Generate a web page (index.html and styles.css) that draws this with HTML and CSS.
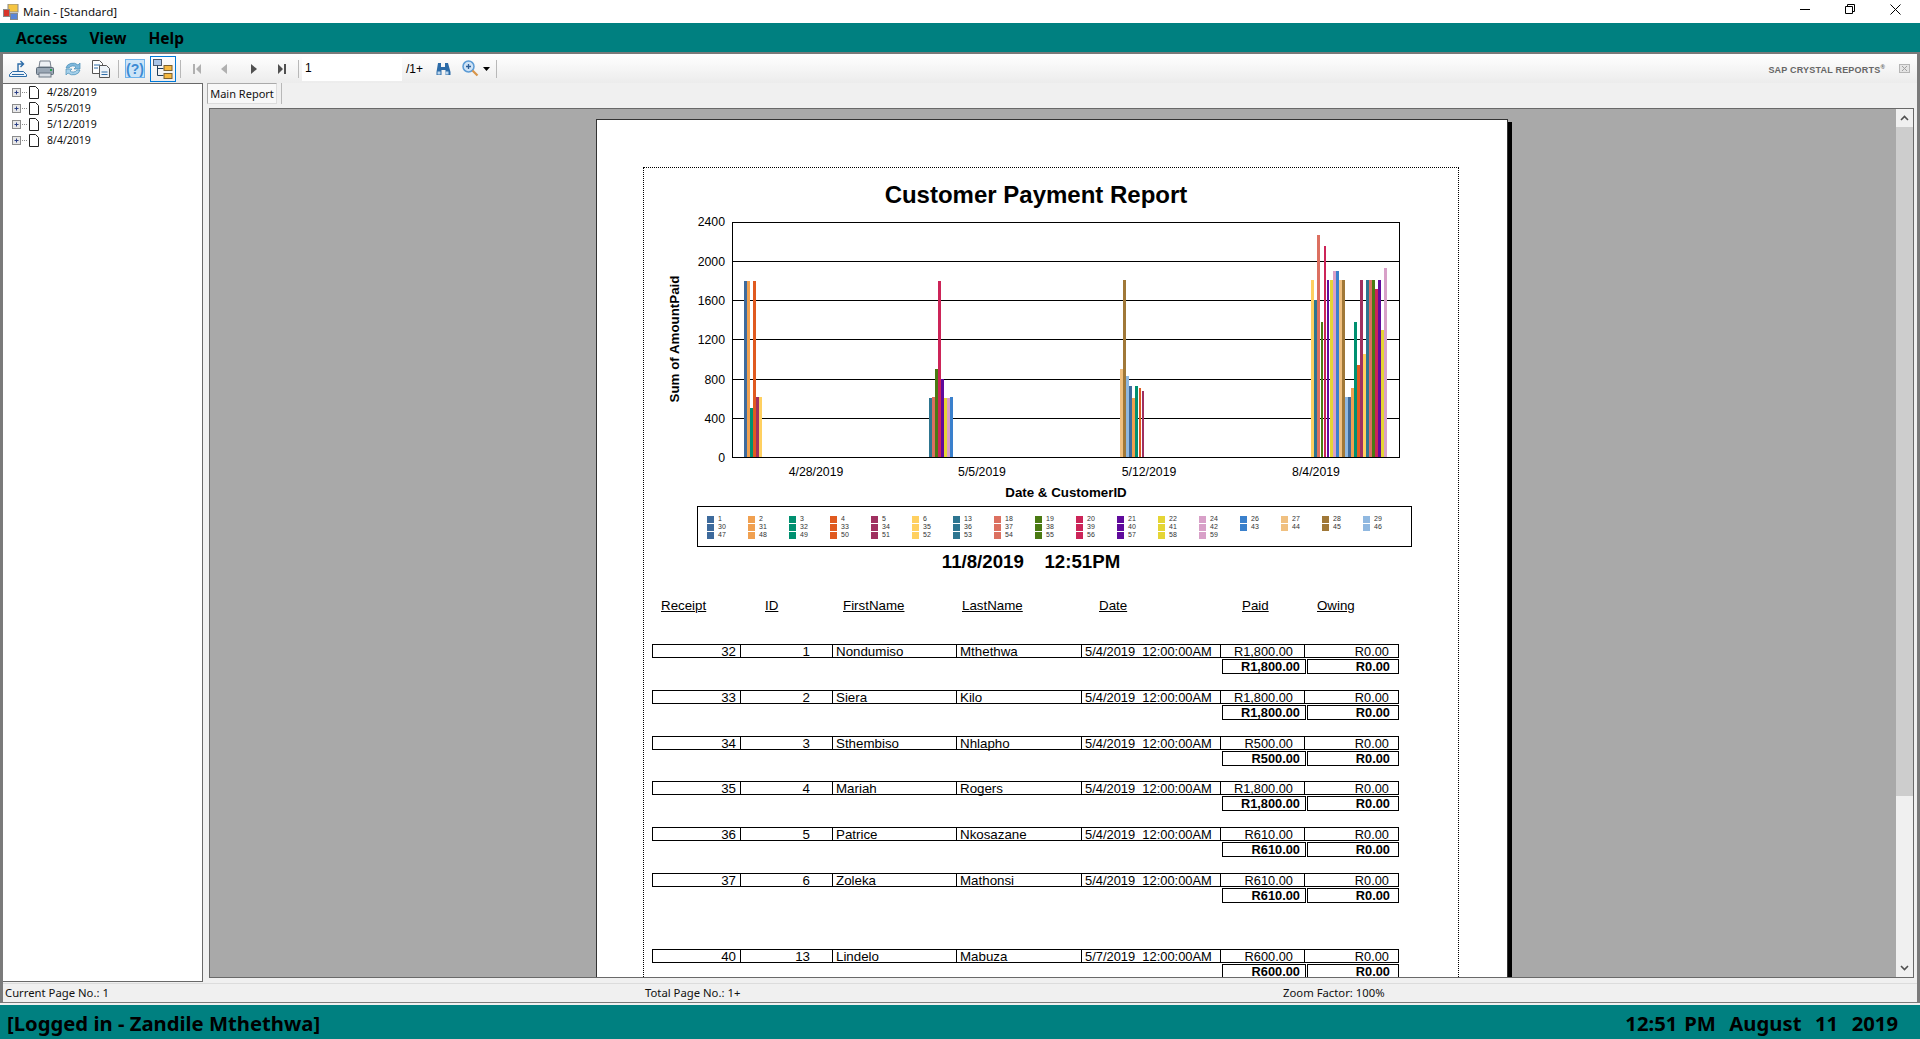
FILE: index.html
```html
<!DOCTYPE html>
<html lang="en">
<head>
  <meta charset="UTF-8" />
  <title>Main - [Standard]</title>
  <link rel="stylesheet" href="styles.css">
</head>
<body>

  <!-- title bar -->
  <div class="titlebar">
    <svg class="app-icon" width="16" height="16" viewBox="0 0 16 16">
      <rect x="5" y="0" width="10" height="8" fill="#f5c542" stroke="#8a8a8a"/>
      <rect x="0.5" y="5.5" width="6" height="7" fill="#d8342a" stroke="#8a8a8a"/>
      <rect x="7.5" y="9.5" width="7" height="6" fill="#5a86d8" stroke="#8a8a8a"/>
    </svg>
    <span class="title-text">Main - [Standard]</span>
    <div class="win-btns">
      <svg width="10" height="10" viewBox="0 0 10 10"><path d="M0 5.5h10" stroke="#000" fill="none"/></svg>
      <svg width="10" height="10" viewBox="0 0 10 10"><path d="M.5 2.5h7v7h-7zM2.5 2.5v-2h7v7h-2" stroke="#000" fill="none"/></svg>
      <svg width="11" height="11" viewBox="0 0 11 11"><path d="M.5 .5l10 10M10.5 .5l-10 10" stroke="#000" fill="none"/></svg>
    </div>
  </div>

  <!-- menu -->
  <div class="menubar">
    <span>Access</span>
    <span>View</span>
    <span>Help</span>
  </div>

  <div class="viewer">

    <!-- toolbar -->
    <div class="toolbar">
      <svg class="tool tool-export" width="20" height="20" viewBox="0 0 20 20">
        <path d="M1.500 17.500v-2l3-3h11l3 3v2z" fill="#eef4fa" stroke="#2d6ca8"/>
        <path d="M4 15.500h12" stroke="#2d6ca8"/>
        <path d="M10 12.500V5h5M12.500 2l3 3-3 3" fill="none" stroke="#2d6ca8" stroke-width="1.400"/>
      </svg>
      <svg class="tool tool-print" width="20" height="20" viewBox="0 0 20 20">
        <path d="M5 2h10l1 6H4z" fill="#eef1f5" stroke="#77808c"/>
        <rect x="1.500" y="8.500" width="17" height="7" rx="1" fill="#9aa7b5" stroke="#5c6a78"/>
        <rect x="4" y="14" width="12" height="4" fill="#d7dde4" stroke="#6d7885"/>
        <rect x="15" y="10" width="2" height="2" fill="#2aa050"/>
      </svg>
      <svg class="tool tool-refresh" width="20" height="20" viewBox="0 0 20 20">
        <path d="M3 9a7 6 0 0 1 12-3l2-2v6h-6l2-2a4.500 4 0 0 0-7 1z" fill="#7fb8dc" stroke="#4a8fb8" stroke-width=".7"/>
        <path d="M17 11a7 6 0 0 1-12 3l-2 2v-6h6l-2 2a4.500 4 0 0 0 7-1z" fill="#a5d0ea" stroke="#4a8fb8" stroke-width=".7"/>
      </svg>
      <svg class="tool tool-copy" width="20" height="20" viewBox="0 0 20 20">
        <path d="M1.500 1.500h7l3 3v10h-10z" fill="#fff" stroke="#555"/>
        <path d="M8.500 6.500h7l3 3v9h-10z" fill="#eef3f8" stroke="#555"/>
        <path d="M3 6h6M3 9h4M10.500 13h6M10.500 15.500h6" stroke="#2d6ca8"/>
      </svg>
      <span class="tool-sep sep-a"></span>
      <span class="help-btn">(?)</span>
      <span class="tree-btn">
        <svg width="22" height="22" viewBox="0 0 22 22">
          <rect x="1.500" y="1.500" width="8" height="6" fill="#a8c4e8" stroke="#4a5a70"/>
          <path d="M5.500 7.500v10h6M5.500 10.500h6" fill="none" stroke="#1e3c5a"/>
          <rect x="12" y="7.500" width="8" height="5" fill="#f5b840" stroke="#7a6030"/>
          <rect x="12" y="15.500" width="8" height="5" fill="#f5b840" stroke="#7a6030"/>
        </svg>
      </span>
      <span class="tool-sep sep-b"></span>
      <svg class="nav nav-first" width="8" height="10" viewBox="0 0 8 10"><path d="M0 0h2v10H0zM8 0v10L3 5z" fill="#b0b0b0"/></svg>
      <svg class="nav nav-prev" width="6" height="10" viewBox="0 0 6 10"><path d="M6 0v10L0 5z" fill="#b0b0b0"/></svg>
      <svg class="nav nav-next" width="6" height="10" viewBox="0 0 6 10"><path d="M0 0v10l6-5z" fill="#505050"/></svg>
      <svg class="nav nav-last" width="8" height="10" viewBox="0 0 8 10"><path d="M0 0v10l5-5zM6 0h2v10H6z" fill="#505050"/></svg>
      <span class="tool-sep sep-c"></span>
      <span class="page-input">1</span>
      <span class="page-total">/1+</span>
      <svg class="tool tool-find" width="16" height="16" viewBox="0 0 16 16">
        <path d="M3 2h3v4h4V2h3l2.500 9v3h-5V9H6.500v5h-5v-3z" fill="#2d6ca8"/>
        <rect x="2.500" y="10.500" width="3" height="3" fill="#bcd6ee"/>
        <rect x="10.500" y="10.500" width="3" height="3" fill="#bcd6ee"/>
      </svg>
      <svg class="tool tool-zoom" width="17" height="17" viewBox="0 0 17 17">
        <circle cx="6.500" cy="6.500" r="5.500" fill="#cfe3f6" stroke="#5b9bd5" stroke-width="1.500"/>
        <path d="M4 6.500h5M6.500 4v5" stroke="#2d5f98" stroke-width="1.300"/>
        <path d="M10.500 10.500l5 5" stroke="#d8954a" stroke-width="2.200"/>
      </svg>
      <svg class="zoom-arrow" width="7" height="4" viewBox="0 0 7 4"><path d="M0 0h7L3.500 4z" fill="#000"/></svg>
      <span class="tool-sep sep-d"></span>
      <span class="brand">SAP CRYSTAL REPORTS<sup>®</sup></span>
      <svg class="brand-close" width="11" height="9" viewBox="0 0 11 9">
        <rect x=".5" y=".5" width="10" height="8" fill="#e4e4e4" stroke="#b5b5b5"/>
        <path d="M3 2l5 5M8 2L3 7" stroke="#a0a0a0"/>
      </svg>
    </div>

    <div class="main">

      <!-- group tree -->
      <ul class="tree">
        <li>
          <svg width="31" height="13" viewBox="0 0 31 13"><use href="#tree-node"/></svg>
          <span>4/28/2019</span>
        </li>
        <li>
          <svg width="31" height="13" viewBox="0 0 31 13"><use href="#tree-node"/></svg>
          <span>5/5/2019</span>
        </li>
        <li>
          <svg width="31" height="13" viewBox="0 0 31 13"><use href="#tree-node"/></svg>
          <span>5/12/2019</span>
        </li>
        <li>
          <svg width="31" height="13" viewBox="0 0 31 13"><use href="#tree-node"/></svg>
          <span>8/4/2019</span>
        </li>
      </ul>

      <div class="report-panel">
        <div class="tabs">
          <span class="tab">Main Report</span>
        </div>

        <div class="report-area">
          <div class="doc">
            <div class="page">
              <div class="frame">
                <h1 class="report-title">Customer Payment Report</h1>

                
                <svg class="chart" width="750" height="290" viewBox="660 209 750 290">
                  <g class="grid">
                    <path d="M732 222.500H1399M732 261.500H1399M732 300.500H1399M732 339.500H1399M732 379.500H1399M732 418.500H1399M732 457.500H1399M732.500 222V458M1399.500 222V458"/>
                  </g>
                  <g>
                    <rect class="s1" x="744" y="281" width="3" height="176"/>
                    <rect class="s2" x="747" y="281" width="3" height="176"/>
                    <rect class="s3" x="750" y="408" width="3" height="49"/>
                    <rect class="s4" x="753" y="281" width="3" height="176"/>
                    <rect class="s5" x="756" y="397" width="3" height="60"/>
                    <rect class="s6" x="759" y="397" width="3" height="60"/>

                    <rect class="s7" x="929" y="398" width="3" height="59"/>
                    <rect class="s8" x="932" y="397" width="3" height="60"/>
                    <rect class="s9" x="935" y="369" width="3" height="88"/>
                    <rect class="s10" x="938" y="281" width="3" height="176"/>
                    <rect class="s11" x="941" y="379" width="3" height="78"/>
                    <rect class="s12" x="944" y="398" width="3" height="59"/>
                    <rect class="s13" x="947" y="398" width="3" height="59"/>
                    <rect class="s14" x="950" y="397" width="3" height="60"/>

                    <rect class="s15" x="1120" y="369" width="3" height="88"/>
                    <rect class="s16" x="1123" y="280" width="3" height="177"/>
                    <rect class="s17" x="1126" y="376" width="3" height="81"/>
                    <rect class="s1" x="1129" y="386" width="3" height="71"/>
                    <rect class="s2" x="1132" y="398" width="3" height="59"/>
                    <rect class="s3" x="1135" y="386" width="3" height="71"/>
                    <rect class="s4" x="1139" y="388" width="2" height="69"/>
                    <rect class="s5" x="1142" y="391" width="2" height="66"/>

                    <rect class="s6" x="1311" y="280" width="3" height="177"/>
                    <rect class="s7" x="1314" y="300" width="3" height="157"/>
                    <rect class="s8" x="1317" y="235" width="3" height="222"/>
                    <rect class="s9" x="1321" y="322" width="2" height="135"/>
                    <rect class="s10" x="1324" y="246" width="2" height="211"/>
                    <rect class="s11" x="1327" y="280" width="2" height="177"/>
                    <rect class="s12" x="1330" y="280" width="3" height="177"/>
                    <rect class="s13" x="1333" y="271" width="3" height="186"/>
                    <rect class="s14" x="1336" y="271" width="3" height="186"/>
                    <rect class="s15" x="1339" y="280" width="3" height="177"/>
                    <rect class="s16" x="1342" y="280" width="3" height="177"/>
                    <rect class="s17" x="1345" y="397" width="3" height="60"/>
                    <rect class="s1" x="1348" y="397" width="3" height="60"/>
                    <rect class="s2" x="1351" y="388" width="3" height="69"/>
                    <rect class="s3" x="1354" y="322" width="3" height="135"/>
                    <rect class="s4" x="1357" y="365" width="3" height="92"/>
                    <rect class="s5" x="1360" y="280" width="3" height="177"/>
                    <rect class="s6" x="1363" y="354" width="3" height="103"/>
                    <rect class="s7" x="1366" y="280" width="3" height="177"/>
                    <rect class="s8" x="1369" y="280" width="3" height="177"/>
                    <rect class="s9" x="1372" y="280" width="3" height="177"/>
                    <rect class="s10" x="1375" y="289" width="3" height="168"/>
                    <rect class="s11" x="1378" y="280" width="3" height="177"/>
                    <rect class="s12" x="1381" y="330" width="3" height="127"/>
                    <rect class="s13" x="1384" y="268" width="3" height="189"/>
                  </g>
                  <g class="axis-y">
                    <text x="725" y="226">2400</text>
                    <text x="725" y="266">2000</text>
                    <text x="725" y="305">1600</text>
                    <text x="725" y="344">1200</text>
                    <text x="725" y="384">800</text>
                    <text x="725" y="423">400</text>
                    <text x="725" y="462">0</text>
                  </g>
                  <g class="axis-x">
                    <text x="816" y="476">4/28/2019</text>
                    <text x="982" y="476">5/5/2019</text>
                    <text x="1149" y="476">5/12/2019</text>
                    <text x="1316" y="476">8/4/2019</text>
                  </g>
                  <text class="axis-title" x="1066" y="497">Date &amp; CustomerID</text>
                  <text class="axis-title" transform="translate(679 339) rotate(-90)">Sum of AmountPaid</text>
                </svg>

                <div class="legend">
                  <div class="legend-col s1"><span>1</span><span>30</span><span>47</span></div>
                  <div class="legend-col s2"><span>2</span><span>31</span><span>48</span></div>
                  <div class="legend-col s3"><span>3</span><span>32</span><span>49</span></div>
                  <div class="legend-col s4"><span>4</span><span>33</span><span>50</span></div>
                  <div class="legend-col s5"><span>5</span><span>34</span><span>51</span></div>
                  <div class="legend-col s6"><span>6</span><span>35</span><span>52</span></div>
                  <div class="legend-col s7"><span>13</span><span>36</span><span>53</span></div>
                  <div class="legend-col s8"><span>18</span><span>37</span><span>54</span></div>
                  <div class="legend-col s9"><span>19</span><span>38</span><span>55</span></div>
                  <div class="legend-col s10"><span>20</span><span>39</span><span>56</span></div>
                  <div class="legend-col s11"><span>21</span><span>40</span><span>57</span></div>
                  <div class="legend-col s12"><span>22</span><span>41</span><span>58</span></div>
                  <div class="legend-col s13"><span>24</span><span>42</span><span>59</span></div>
                  <div class="legend-col s14"><span>26</span><span>43</span></div>
                  <div class="legend-col s15"><span>27</span><span>44</span></div>
                  <div class="legend-col s16"><span>28</span><span>45</span></div>
                  <div class="legend-col s17"><span>29</span><span>46</span></div>
                </div>

                <div class="print-date">11/8/2019    12:51PM</div>

                <div class="col-heads">
                  <u class="h-receipt">Receipt</u>
                  <u class="h-id">ID</u>
                  <u class="h-first">FirstName</u>
                  <u class="h-last">LastName</u>
                  <u class="h-date">Date</u>
                  <u class="h-paid">Paid</u>
                  <u class="h-owing">Owing</u>
                </div>

                <div class="group">
                  <div class="row">
                    <span class="c-receipt">32</span><span class="c-id">1</span><span class="c-text">Nondumiso</span><span class="c-text">Mthethwa</span><span class="c-date">5/4/2019  12:00:00AM</span><span class="c-paid">R1,800.00</span><span class="c-owing">R0.00</span>
                  </div>
                  <div class="total"><span>R1,800.00</span><span>R0.00</span></div>
                </div>
                <div class="group">
                  <div class="row">
                    <span class="c-receipt">33</span><span class="c-id">2</span><span class="c-text">Siera</span><span class="c-text">Kilo</span><span class="c-date">5/4/2019  12:00:00AM</span><span class="c-paid">R1,800.00</span><span class="c-owing">R0.00</span>
                  </div>
                  <div class="total"><span>R1,800.00</span><span>R0.00</span></div>
                </div>
                <div class="group">
                  <div class="row">
                    <span class="c-receipt">34</span><span class="c-id">3</span><span class="c-text">Sthembiso</span><span class="c-text">Nhlapho</span><span class="c-date">5/4/2019  12:00:00AM</span><span class="c-paid">R500.00</span><span class="c-owing">R0.00</span>
                  </div>
                  <div class="total"><span>R500.00</span><span>R0.00</span></div>
                </div>
                <div class="group">
                  <div class="row">
                    <span class="c-receipt">35</span><span class="c-id">4</span><span class="c-text">Mariah</span><span class="c-text">Rogers</span><span class="c-date">5/4/2019  12:00:00AM</span><span class="c-paid">R1,800.00</span><span class="c-owing">R0.00</span>
                  </div>
                  <div class="total"><span>R1,800.00</span><span>R0.00</span></div>
                </div>
                <div class="group">
                  <div class="row">
                    <span class="c-receipt">36</span><span class="c-id">5</span><span class="c-text">Patrice</span><span class="c-text">Nkosazane</span><span class="c-date">5/4/2019  12:00:00AM</span><span class="c-paid">R610.00</span><span class="c-owing">R0.00</span>
                  </div>
                  <div class="total"><span>R610.00</span><span>R0.00</span></div>
                </div>
                <div class="group group-last">
                  <div class="row">
                    <span class="c-receipt">37</span><span class="c-id">6</span><span class="c-text">Zoleka</span><span class="c-text">Mathonsi</span><span class="c-date">5/4/2019  12:00:00AM</span><span class="c-paid">R610.00</span><span class="c-owing">R0.00</span>
                  </div>
                  <div class="total"><span>R610.00</span><span>R0.00</span></div>
                </div>
                <div class="group">
                  <div class="row">
                    <span class="c-receipt">40</span><span class="c-id">13</span><span class="c-text">Lindelo</span><span class="c-text">Mabuza</span><span class="c-date">5/7/2019  12:00:00AM</span><span class="c-paid">R600.00</span><span class="c-owing">R0.00</span>
                  </div>
                  <div class="total"><span>R600.00</span><span>R0.00</span></div>
                </div>
              </div>
            </div>
          </div>

          <div class="scrollbar">
            <span class="scroll-btn">
              <svg width="9" height="6" viewBox="0 0 9 6"><path d="M1 5l3.500-3.500L8 5" fill="none" stroke="#505050" stroke-width="1.600"/></svg>
            </span>
            <span class="scroll-thumb"></span>
            <span class="scroll-track"></span>
            <span class="scroll-btn">
              <svg width="9" height="6" viewBox="0 0 9 6"><path d="M1 1l3.500 3.500L8 1" fill="none" stroke="#505050" stroke-width="1.600"/></svg>
            </span>
          </div>
        </div>
      </div>
    </div>

    <!-- status bar -->
    <div class="statusbar">
      <span class="st-page">Current Page No.: 1</span>
      <span class="st-total">Total Page No.: 1+</span>
      <span class="st-zoom">Zoom Factor: 100%</span>
    </div>
  </div>

  <!-- footer -->
  <div class="footer">
    <span>[Logged in - Zandile Mthethwa]</span>
    <span class="clock">12:51 PM  August  11  2019</span>
  </div>

  <svg width="0" height="0" class="defs">
    <symbol id="tree-node" viewBox="0 0 31 13">
      <rect x="0.500" y="2.500" width="8" height="8" fill="#e8e8e8" stroke="#8c8c8c"/>
      <path d="M2.500 6.500h4M4.500 4.500v4" stroke="#2b3f86"/>
      <path d="M10 6.500h5" stroke="#8c8c8c" stroke-dasharray="1 1"/>
      <path d="M17.500 .5h6l3 3v9h-9z" fill="#fff" stroke="#222"/>
    </symbol>
  </svg>

</body>
</html>
```

FILE: styles.css
```css
* { box-sizing: border-box; }

html, body {
  margin: 0;
  height: 1039px;
  overflow: hidden;
}

body {
  display: flex;
  flex-direction: column;
  background: #f0f0f0;
  color: #000;
  font-family: "Noto Sans", sans-serif;
}

/* title bar */
.titlebar {
  height: 23px;
  flex: none;
  display: flex;
  align-items: center;
  background: #fff;
  padding-left: 3px;
}

.title-text {
  margin-left: 4px;
  font-size: 11.6px;
  color: #111;
}

.win-btns {
  margin-left: auto;
  display: flex;
  align-items: center;
  gap: 35px;
  padding-right: 19px;
  margin-top: -5px;
}

/* menu */
.menubar {
  height: 29px;
  flex: none;
  display: flex;
  align-items: center;
  gap: 22px;
  padding-left: 16px;
  background: #008080;
  font-size: 15.5px;
  font-weight: bold;
}

/* viewer frame */
.viewer {
  height: 951px;
  flex: none;
  margin-bottom: 2px;
  display: flex;
  flex-direction: column;
  border-top: 2px solid #7a7a7a;
  border-left: 3px solid #7a7a7a;
  border-right: 3px solid #7a7a7a;
  border-bottom: 1px solid #7a7a7a;
  background: #f0f0f0;
}

/* toolbar */
.toolbar {
  height: 29px;
  flex: none;
  display: flex;
  align-items: center;
  background: linear-gradient(#fff, #ececec);
  font-size: 11px;
}

.tool { flex: none; }
.tool-export { margin-left: 5px; }
.tool-print { margin-left: 7px; }
.tool-refresh { margin-left: 8px; }
.tool-copy { margin-left: 8px; }

.tool-sep {
  width: 1px;
  height: 18px;
  flex: none;
  background: #b8b8b8;
}
.sep-a { margin-left: 7px; }
.sep-b { margin-left: 4px; }
.sep-c { margin-left: 12px; }
.sep-d { margin-left: 6px; }

.help-btn {
  width: 20px;
  height: 19px;
  margin-left: 6px;
  display: flex;
  align-items: center;
  justify-content: center;
  background: #cce4f7;
  border: 1px solid #6fb3ec;
  color: #3d8bd4;
  font-family: "Liberation Sans", sans-serif;
  font-size: 14px;
  font-weight: bold;
}

.tree-btn {
  width: 26px;
  height: 26px;
  margin-left: 5px;
  display: flex;
  align-items: center;
  justify-content: center;
  border: 1px solid #0078d7;
}

.nav { flex: none; }
.nav-first { margin-left: 12px; }
.nav-prev { margin-left: 20px; }
.nav-next { margin-left: 24px; }
.nav-last { margin-left: 21px; }

.page-input {
  width: 100px;
  height: 24px;
  margin-left: 3px;
  padding: 4px 3px 0;
  background: #fff;
  font-family: "Liberation Sans", sans-serif;
  font-size: 12px;
  line-height: 14px;
}

.page-total {
  margin-left: 4px;
  font-family: "Liberation Sans", sans-serif;
  font-size: 12px;
}
.tool-find { margin-left: 12px; }
.tool-zoom { margin-left: 11px; }
.zoom-arrow { margin-left: 4px; flex: none; }

.brand {
  margin-left: auto;
  margin-top: 3px;
  font-family: "Liberation Sans", sans-serif;
  font-size: 9px;
  font-weight: bold;
  letter-spacing: .2px;
  color: #666;
}
.brand sup { font-size: 6px; line-height: 0; }

.brand-close {
  margin: 0 7px 0 14px;
  flex: none;
}

/* tree + report */
.main {
  height: 900px;
  flex: none;
  display: flex;
}

.tree {
  width: 200px;
  flex: none;
  height: 899px;
  margin: 0;
  padding: 0 0 0 9px;
  list-style: none;
  background: #fff;
  border: 1px solid #696969;
  border-left: 0;
  font-size: 10.5px;
  color: #111;
}

.tree li {
  height: 16px;
  display: flex;
  align-items: center;
  gap: 4px;
}

.report-panel {
  flex: 1;
  min-width: 0;
  display: flex;
  flex-direction: column;
  padding: 0 3px 5px 6px;
}

.tabs {
  height: 25px;
  flex: none;
  display: flex;
  align-items: flex-start;
  margin-left: -2px;
}

.tab {
  height: 21px;
  width: 70px;
  display: flex;
  align-items: center;
  justify-content: center;
  font-size: 11px;
  color: #111;
  background: #f8f8f8;
  border: 1px solid #aaa;
  border-right-color: #ddd;
  border-bottom-color: #ddd;
  box-shadow: 4px 0 0 #f0f0f0, 5px 0 0 #b8b8b8;
}

.report-area {
  flex: 1;
  min-height: 0;
  display: flex;
  background: #a9a9a9;
  border: 1px solid #696969;
}

.doc {
  flex: 1;
  min-width: 0;
  overflow: hidden;
}

.page {
  width: 912px;
  margin: 10px 0 0 386px;
  padding: 47px 0 0 46px;
  background: #fff;
  border: 1px solid #333;
  box-shadow: 4px 3px 0 #000;
  font-family: "Liberation Sans", sans-serif;
}

.frame {
  width: 816px;
  height: 1000px;
  border: 1px dotted #000;
}

.report-title {
  margin: 13px 0 0;
  padding-right: 30px;
  text-align: center;
  font-size: 24px;
  line-height: 28px;
}

.chart {
  display: block;
  margin-left: 16px;
}

.grid path {
  fill: none;
  stroke: #000;
  stroke-width: 1;
}

.chart rect { fill: var(--c); }

.chart text {
  font-family: "Liberation Sans", sans-serif;
  font-size: 12.3px;
  fill: #000;
}

.axis-y text { text-anchor: end; }
.axis-x text { text-anchor: middle; }
.chart .axis-title { font-size: 13.33px; font-weight: bold; text-anchor: middle; }

/* series colours, shared by the bars and the legend */
.s1 { --c: #3d6a9c; }
.s2 { --c: #f0a050; }
.s3 { --c: #009070; }
.s4 { --c: #e05a20; }
.s5 { --c: #a03060; }
.s6 { --c: #ffd060; }
.s7 { --c: #2d7590; }
.s8 { --c: #dc7060; }
.s9 { --c: #4a7a12; }
.s10 { --c: #cc2458; }
.s11 { --c: #600a9c; }
.s12 { --c: #e5d535; }
.s13 { --c: #d8a0c8; }
.s14 { --c: #3a80cc; }
.s15 { --c: #f0c080; }
.s16 { --c: #a07838; }
.s17 { --c: #90b8e0; }

.legend {
  width: 715px;
  height: 41px;
  margin: 7px 0 0 53px;
  padding: 8px 0 0 9px;
  display: flex;
  border: 1px solid #000;
}

.legend-col {
  width: 41px;
  flex: none;
  display: flex;
  flex-direction: column;
}

.legend-col span {
  height: 8px;
  display: flex;
  align-items: center;
  gap: 4px;
  font-size: 7px;
  line-height: 8px;
  color: #333;
}

.legend-col span::before {
  content: "";
  width: 7px;
  height: 7px;
  flex: none;
  background: var(--c);
}

.print-date {
  margin: 4px 0 0;
  padding-right: 40px;
  text-align: center;
  white-space: pre;
  font-size: 18.67px;
  font-weight: bold;
  line-height: 22px;
}

.col-heads {
  height: 14px;
  margin: 26px 0 0 8px;
  display: grid;
  grid-template-columns: 104px 78px 119px 137px 143px 75px 80px;
  font-size: 13.33px;
  line-height: 14px;
  padding-left: 9px;
}

.group {
  width: 747px;
  margin: 0 0 15.8px 8px;
  font-size: 13.33px;
  line-height: 13px;
}

.col-heads + .group { margin-top: 31px; }
.group-last { margin-bottom: 46px; }

.row {
  height: 14px;
  display: grid;
  grid-template-columns: 88px 92px 124px 125px 139px 84px 93px;
  border: 1px solid #000;
}

.row span {
  border-right: 1px solid #000;
  white-space: pre;
  padding: 0 3px;
  text-align: left;
}

.row span:last-child { border-right: 0; }

.row .c-receipt { text-align: right; padding-right: 4px; }
.row .c-id { text-align: right; padding-right: 22px; }
.row .c-date { font-size: 12.9px; }
.row .c-paid { text-align: right; padding-right: 11px; font-size: 12.8px; }
.row .c-owing { text-align: right; padding-right: 9px; font-size: 12.8px; }

.total {
  height: 15px;
  margin: 1px 0 0 570px;
  display: grid;
  grid-template-columns: 84px 92px;
  gap: 1px;
  font-size: 12.8px;
  font-weight: bold;
}

.total span {
  border: 1px solid #000;
  text-align: right;
  padding-right: 5px;
}
.total span:last-child { padding-right: 8px; }

/* scrollbar */
.scrollbar {
  width: 17px;
  flex: none;
  display: flex;
  flex-direction: column;
  background: #f0f0f0;
}

.scroll-btn {
  height: 18px;
  flex: none;
  display: flex;
  align-items: center;
  justify-content: center;
}

.scroll-thumb {
  height: 669px;
  flex: none;
  background: #cdcdcd;
}

.scroll-track { flex: 1; }

/* status bar */
.statusbar {
  flex: 1;
  display: flex;
  align-items: center;
  padding-bottom: 1px;
  border-top: 1px solid #dcdcdc;
  font-size: 11.3px;
  color: #111;
}

.st-page { width: 642px; padding-left: 2px; }
.st-total { width: 638px; }

/* footer */
.footer {
  flex: 1;
  display: flex;
  align-items: center;
  justify-content: space-between;
  padding: 2px 22px 0 7px;
  background: #008080;
  font-size: 20.25px;
  font-weight: bold;
  white-space: pre;
}

.clock { word-spacing: 1.5px; }

.defs { position: absolute; }
```
